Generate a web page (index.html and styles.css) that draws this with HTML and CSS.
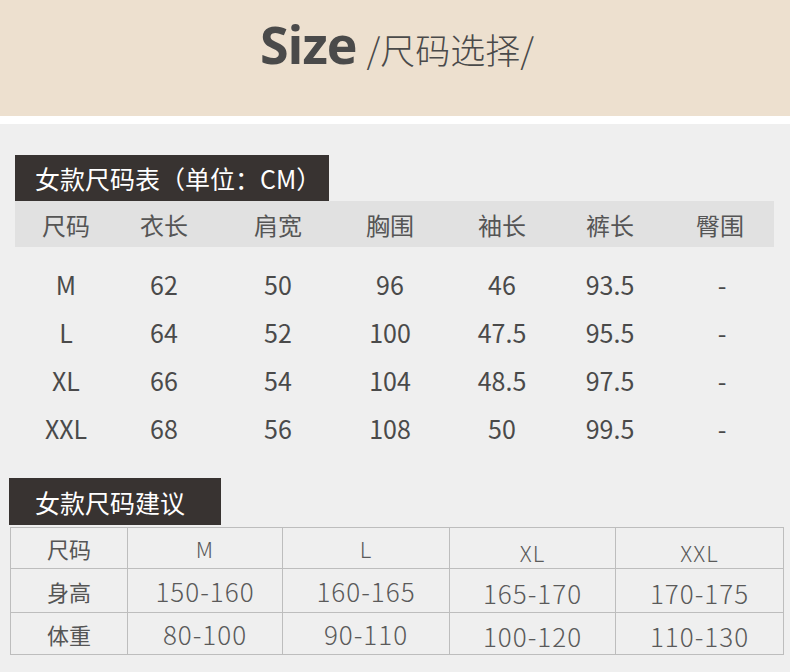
FILE: index.html
```html
<!DOCTYPE html>
<html lang="zh-CN">
<head>
<meta charset="utf-8">
<link rel="stylesheet" href="styles.css">
</head>
<body>
<header class="banner">
  <h1 class="title"><span class="title-en">Size</span><span class="title-cn">/尺码选择/</span></h1>
</header>
<div class="divider"></div>
<main class="content">
  <section class="chart">
    <div class="label label-wide">女款尺码表（单位：CM）</div>
    <div class="grid head">
      <span>尺码</span><span>衣长</span><span>肩宽</span><span>胸围</span><span>袖长</span><span>裤长</span><span>臀围</span>
    </div>
    <div class="grid row"><span>M</span><span>62</span><span>50</span><span>96</span><span>46</span><span>93.5</span><span>-</span></div>
    <div class="grid row"><span>L</span><span>64</span><span>52</span><span>100</span><span>47.5</span><span>95.5</span><span>-</span></div>
    <div class="grid row"><span>XL</span><span>66</span><span>54</span><span>104</span><span>48.5</span><span>97.5</span><span>-</span></div>
    <div class="grid row"><span>XXL</span><span>68</span><span>56</span><span>108</span><span>50</span><span>99.5</span><span>-</span></div>
  </section>
  <section class="advice">
    <div class="label label-narrow">女款尺码建议</div>
    <table class="atable">
      <tr class="r1"><th>尺码</th><td>M</td><td>L</td><td class="low">XL</td><td class="low">XXL</td></tr>
      <tr class="r2"><th>身高</th><td>150-160</td><td>160-165</td><td class="low">165-170</td><td class="low">170-175</td></tr>
      <tr class="r3"><th>体重</th><td>80-100</td><td>90-110</td><td class="low">100-120</td><td class="low">110-130</td></tr>
    </table>
  </section>
</main>
</body>
</html>
```
FILE: styles.css
```css
* { box-sizing: border-box; }
html, body { margin: 0; padding: 0; }
body {
  width: 790px;
  height: 672px;
  overflow: hidden;
  background: #efefef;
  font-family: "Noto Sans CJK SC", "Noto Sans", sans-serif;
  color: #4a4a4a;
}
.banner {
  height: 116px;
  background: #ede0cf;
  display: flex;
  justify-content: center;
  padding-top: 9px;
  padding-left: 4px;
}
.title {
  margin: 0;
  font-weight: normal;
  display: flex;
  align-items: baseline;
  color: #4a4a4a;
}
.title-en {
  font-family: "Open Sans", sans-serif;
  font-weight: 700;
  font-size: 52px;
  letter-spacing: -1px;
  margin-right: 10px;
  line-height: 70px;
}
.title-cn {
  font-family: "Noto Sans CJK SC", sans-serif;
  font-weight: 300;
  font-size: 35px;
}
.divider { height: 8px; background: #ffffff; }
.content { padding-top: 31px; }
.chart { margin-left: 15px; width: 759px; }
.label {
  background: #383331;
  color: #ffffff;
  font-size: 25px;
  font-weight: 400;
  line-height: 46px;
  padding-left: 20px;
  height: 46px;
  white-space: nowrap;
}
.label-wide { width: 314px; }
.grid {
  display: grid;
  grid-template-columns: 102px 94px 134px 90px 134px 82px 123px;
  justify-items: center;
  align-items: center;
}
.grid > span:nth-child(7) { padding-left: 15px; }
.row > span:nth-child(7) { padding-left: 19px; }
.head {
  background: #e1e1e1;
  height: 46px;
  font-size: 24px;
  color: #555;
  margin-bottom: 13px;
}
.row {
  height: 48px;
  font-size: 25px;
  color: #4a4a4a;
}
.advice { margin-top: 26px; margin-left: 9px; }
.label-narrow { width: 212px; height: 47px; line-height: 48px; padding-left: 26px; }
.atable {
  margin-top: 2px;
  margin-left: 1px;
  border-collapse: collapse;
  width: 774px;
  table-layout: fixed;
  color: #5a5a5a;
}
.atable th, .atable td {
  border: 1px solid #bdbdbd;
  text-align: center;
  padding: 0;
  font-weight: 300;
}
.atable th { width: 117px; font-size: 22px; color: #555; font-weight: 400; }
.atable tr td:nth-child(2) { width: 155px; }
.atable tr td:nth-child(3) { width: 167px; }
.atable tr td:nth-child(4) { width: 166px; }
.atable td { font-size: 26px; letter-spacing: 1px; }
.r1 { height: 41px; }
.r1 td { font-size: 22px; }
.r2 { height: 44px; }
.r3 { height: 39px; }
.atable td.low { padding-top: 4px; }
.r1 td.low { padding-top: 7px; }
```
